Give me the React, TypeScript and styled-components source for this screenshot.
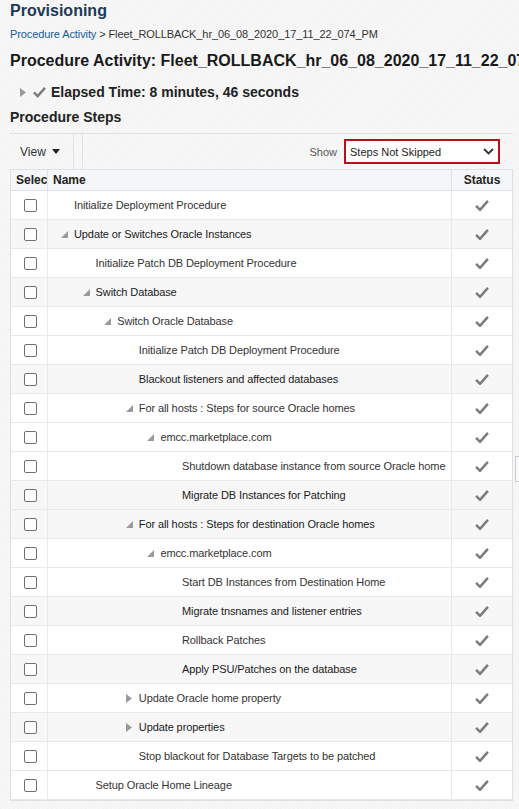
import React from "react";
import styled, { createGlobalStyle } from "styled-components";

const Global = createGlobalStyle`
  html, body { margin: 0; padding: 0; }
  body {
    background: #f6f6f6;
    font-family: "Liberation Sans", Arial, sans-serif;
    color: #333;
    overflow: hidden;
  }
`;

const Page = styled.div`
  position: relative;
  width: 519px;
  height: 809px;
  overflow: hidden;
  padding: 1px 6px 0 10px;
  box-sizing: border-box;
  background: repeating-linear-gradient(135deg, #f7f7f7 0 2px, #f3f3f3 2px 3px);
`;

const Title = styled.h1`
  margin: 0;
  font-size: 16px;
  line-height: 20px;
  font-weight: bold;
  color: #1c3956;
  white-space: nowrap;
`;

const Crumbs = styled.div`
  margin-top: 6px;
  font-size: 11px;
  line-height: 14px;
  letter-spacing: -0.1px;
  color: #333;
  white-space: nowrap;
`;

const CrumbLink = styled.span`
  color: #145c9e;
`;

const SubTitle = styled.h2`
  margin: 10px 0 0;
  font-size: 16px;
  line-height: 20px;
  font-weight: bold;
  color: #1a1a1a;
  white-space: nowrap;
`;

const Elapsed = styled.div`
  margin-top: 11px;
  display: flex;
  align-items: center;
  height: 20px;
  padding-left: 10px;
  gap: 6px;
  font-size: 14px;
  font-weight: bold;
  color: #222;
  white-space: nowrap;
`;

const ElapsedText = styled.span`
  margin-left: -2px;
`;

const SectionTitle = styled.h3`
  margin: 5px 0 0;
  font-size: 14px;
  line-height: 20px;
  font-weight: bold;
  color: #222;
`;

const Toolbar = styled.div`
  margin-top: 6px;
  height: 36px;
  border-top: 1px solid #dfe3e7;
  display: flex;
  align-items: center;
  box-sizing: border-box;
`;

const ViewMenu = styled.div`
  display: flex;
  align-items: center;
  gap: 6px;
  padding: 0 13px 0 10px;
  height: 100%;
  font-size: 12px;
  color: #333;
`;

const Sep = styled.div`
  width: 1px;
  height: 100%;
  background: #e0e3e6;
  margin-right: 8px;
`;

const Spacer = styled.div`
  flex: 1;
`;

const ShowLabel = styled.span`
  font-size: 11px;
  color: #555;
  margin-right: 7px;
`;

const Select = styled.div`
  width: 156px;
  height: 25px;
  box-sizing: border-box;
  border: 2px solid #b5111a;
  background: #fff;
  display: flex;
  align-items: center;
  justify-content: space-between;
  padding: 0 4px 0 4px;
  font-size: 11px;
  color: #222;
  margin-right: 13px;
`;

const Table = styled.div`
  border: 1px solid #d9e0e6;
  border-top: none;
  background: #fff;
`;

const Grid = styled.div<{ $bg?: string }>`
  display: grid;
  grid-template-columns: 37px 1fr 60px;
  background: ${(p) => p.$bg || "#fff"};
`;

const HeadCell = styled.div<{ $align?: string }>`
  height: 22px;
  box-sizing: border-box;
  border-top: 1px solid #dbe2e8;
  border-bottom: 1px solid #dbe2e8;
  border-right: 1px solid #dbe2e8;
  background: #f4f6f8;
  font-size: 12px;
  font-weight: bold;
  color: #222;
  display: flex;
  align-items: center;
  justify-content: ${(p) => p.$align || "flex-start"};
  padding: 0 5px;
  overflow: hidden;
  white-space: nowrap;
  &:last-child { border-right: none; }
`;

const Cell = styled.div<{ $center?: boolean }>`
  height: 29px;
  box-sizing: border-box;
  border-bottom: 1px solid #e6eaee;
  border-right: 1px solid #e6eaee;
  display: flex;
  align-items: center;
  justify-content: ${(p) => (p.$center ? "center" : "flex-start")};
  &:last-child { border-right: none; }
`;

const NameCell = styled(Cell)<{ $level: number; $dark?: boolean }>`
  padding-left: ${(p) => 13 + p.$level * 21.6}px;
  font-size: 11px;
  letter-spacing: -0.1px;
  color: ${(p) => (p.$dark ? "#1a1a1a" : "#333")};
  white-space: nowrap;
  overflow: hidden;
`;

const Twisty = styled.span`
  width: 13px;
  display: inline-flex;
  align-items: center;
  flex: none;
`;

const Checkbox = styled.span`
  width: 11px;
  height: 11px;
  border: 1px solid #707070;
  border-radius: 2px;
  background: #fff;
  margin-left: 2px;
`;

const Handle = styled.div`
  position: absolute;
  right: 0;
  top: 456px;
  width: 3px;
  height: 24px;
  border: 1px solid #c8cdd2;
  border-right: none;
  background: #fafafa;
`;

const Check = ({ size = 16 }: { size?: number }) => (
  <svg width={size} height={size * 0.8} viewBox="0 0 16 13">
    <path d="M2 7 L6 11 L14 2" fill="none" stroke="#7c7c7c" strokeWidth="2.6" strokeLinejoin="miter" />
  </svg>
);

const Expanded = () => (
  <svg width="7" height="7" viewBox="0 0 7 7">
    <polygon points="7,0 7,7 0,7" fill="#9a9a9a" />
  </svg>
);

const Collapsed = () => (
  <svg width="6" height="9" viewBox="0 0 6 9">
    <polygon points="0,0 6,4.5 0,9" fill="#9a9a9a" />
  </svg>
);

type Step = { name: string; level: number; node?: "open" | "closed"; dark?: boolean };

const steps: Step[] = [
  { name: "Initialize Deployment Procedure", level: 0 },
  { name: "Update or Switches Oracle Instances", level: 0, node: "open", dark: true },
  { name: "Initialize Patch DB Deployment Procedure", level: 1 },
  { name: "Switch Database", level: 1, node: "open", dark: true },
  { name: "Switch Oracle Database", level: 2, node: "open" },
  { name: "Initialize Patch DB Deployment Procedure", level: 3 },
  { name: "Blackout listeners and affected databases", level: 3, dark: true },
  { name: "For all hosts : Steps for source Oracle homes", level: 3, node: "open" },
  { name: "emcc.marketplace.com", level: 4, node: "open" },
  { name: "Shutdown database instance from source Oracle home", level: 5 },
  { name: "Migrate DB Instances for Patching", level: 5, dark: true },
  { name: "For all hosts : Steps for destination Oracle homes", level: 3, node: "open", dark: true },
  { name: "emcc.marketplace.com", level: 4, node: "open" },
  { name: "Start DB Instances from Destination Home", level: 5 },
  { name: "Migrate tnsnames and listener entries", level: 5, dark: true },
  { name: "Rollback Patches", level: 5 },
  { name: "Apply PSU/Patches on the database", level: 5, dark: true },
  { name: "Update Oracle home property", level: 3, node: "closed" },
  { name: "Update properties", level: 3, node: "closed", dark: true },
  { name: "Stop blackout for Database Targets to be patched", level: 3 },
  { name: "Setup Oracle Home Lineage", level: 1 },
];

export default function App() {
  return (
    <Page>
      <Global />
      <Title>Provisioning</Title>
      <Crumbs>
        <CrumbLink>Procedure Activity</CrumbLink> &gt; Fleet_ROLLBACK_hr_06_08_2020_17_11_22_074_PM
      </Crumbs>
      <SubTitle>Procedure Activity: Fleet_ROLLBACK_hr_06_08_2020_17_11_22_074_PM</SubTitle>
      <Elapsed>
        <Collapsed />
        <Check size={15} />
        <ElapsedText>Elapsed Time: 8 minutes, 46 seconds</ElapsedText>
      </Elapsed>
      <SectionTitle>Procedure Steps</SectionTitle>
      <Toolbar>
        <ViewMenu>
          View
          <svg width="8" height="5" viewBox="0 0 8 5">
            <polygon points="0,0 8,0 4,5" fill="#222" />
          </svg>
        </ViewMenu>
        <Sep />
        <Sep />
        <Spacer />
        <ShowLabel>Show</ShowLabel>
        <Select>
          <span>Steps Not Skipped</span>
          <svg width="11" height="7" viewBox="0 0 11 7">
            <path d="M1 1 L5.5 5.5 L10 1" fill="none" stroke="#333" strokeWidth="1.8" />
          </svg>
        </Select>
      </Toolbar>
      <Table>
        <Grid>
          <HeadCell>Select</HeadCell>
          <HeadCell>Name</HeadCell>
          <HeadCell $align="center">Status</HeadCell>
        </Grid>
        {steps.map((s, i) => (
          <Grid key={i} $bg={s.dark ? "#f7f7f7" : "#fff"}>
            <Cell $center>
              <Checkbox />
            </Cell>
            <NameCell $level={s.level} $dark={s.dark}>
              <Twisty>
                {s.node === "open" ? <Expanded /> : s.node === "closed" ? <Collapsed /> : null}
              </Twisty>
              {s.name}
            </NameCell>
            <Cell $center>
              <Check />
            </Cell>
          </Grid>
        ))}
      </Table>
      <Handle />
    </Page>
  );
}
